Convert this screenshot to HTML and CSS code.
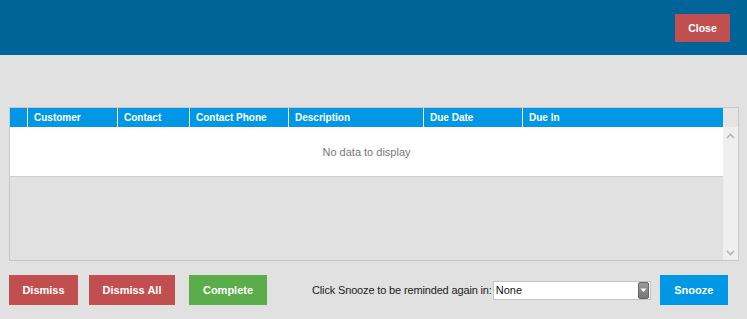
FILE: index.html
```html
<!DOCTYPE html>
<html lang="en">
<head>
    <meta charset="UTF-8">
    <title>Reminders</title>
    <link rel="stylesheet" href="styles.css">
</head>
<body>
    <div class="top-bar">
        <button class="btn btn-red btn-close">Close</button>
    </div>

    <div class="grid-wrap">
        <div class="grid-main">
            <div class="grid-head">
                <div class="col col-sel"></div>
                <div class="col col-customer">Customer</div>
                <div class="col col-contact">Contact</div>
                <div class="col col-phone">Contact Phone</div>
                <div class="col col-desc">Description</div>
                <div class="col col-date">Due Date</div>
                <div class="col col-in">Due In</div>
            </div>
            <div class="grid-empty">No data to display</div>
        </div>
        <div class="scrollbar">
            <div class="scroll-corner"></div>
            <div class="scroll-track">
                <svg width="9" height="6" viewBox="0 0 9 6"><path d="M1 5 L4.5 1.5 L8 5" fill="none" stroke="#b4b4b4" stroke-width="1.6"/></svg>
                <svg width="9" height="6" viewBox="0 0 9 6"><path d="M1 1 L4.5 4.5 L8 1" fill="none" stroke="#b4b4b4" stroke-width="1.6"/></svg>
            </div>
        </div>
    </div>

    <div class="actions">
        <button class="btn btn-red btn-dismiss">Dismiss</button>
        <button class="btn btn-red btn-dismiss-all">Dismiss All</button>
        <button class="btn btn-green btn-complete">Complete</button>
        <div class="snooze">
            <span class="snooze-label">Click Snooze to be reminded again in:</span>
            <div class="select">
                <span>None</span>
                <span class="select-arrow">
                    <svg width="7" height="5" viewBox="0 0 7 5"><path d="M0.5 0.5 L3.5 4 L6.5 0.5 Z" fill="#fff"/></svg>
                </span>
            </div>
        </div>
        <button class="btn btn-blue btn-snooze">Snooze</button>
    </div>
</body>
</html>
```

FILE: styles.css
```css
body {
    margin: 0;
    background: #e1e1e1;
    font-family: "Liberation Sans", Arial, sans-serif;
    font-size: 11px;
    width: 747px;
    height: 319px;
    overflow: hidden;
}
.top-bar {
    height: 55px;
    background: #006498;
    display: flex;
    justify-content: flex-end;
    align-items: flex-start;
    padding: 14px 17px 0 0;
    box-sizing: border-box;
}
.btn {
    border: none;
    color: #fff;
    font-family: "Liberation Sans", Arial, sans-serif;
    font-weight: bold;
    font-size: 11px;
    padding: 0;
    cursor: pointer;
}
.btn-red { background: #c24f50; }
.btn-green { background: #5bad4a; }
.btn-blue { background: #0098e4; }
.btn-close {
    width: 55px;
    height: 28px;
    font-size: 10.5px;
}

/* grid */
.grid-wrap {
    margin: 52px 8px 0 9px;
    height: 154px;
    border: 1px solid #c9c9c9;
    box-sizing: border-box;
    display: flex;
}
.grid-main {
    flex: 1;
}
.grid-head {
    display: flex;
    height: 19px;
    background: #0098e4;
    color: #fff;
    font-weight: bold;
    font-size: 10px;
}
.col {
    box-sizing: border-box;
    border-left: 1px solid #fff;
    padding-left: 6px;
    line-height: 19px;
    white-space: nowrap;
}
.col-sel { width: 17px; border-left: none; padding: 0; }
.col-customer { width: 90px; }
.col-contact { width: 72px; }
.col-phone { width: 99px; }
.col-desc { width: 135px; }
.col-date { width: 99px; }
.col-in { flex: 1; }
.grid-empty {
    height: 49px;
    background: #fff;
    border-bottom: 1px solid #cfcfcf;
    color: #777;
    text-align: center;
    line-height: 51px;
}
.scrollbar {
    width: 15px;
    display: flex;
    flex-direction: column;
}
.scroll-corner {
    height: 19px;
    background: #e4e4e4;
}
.scroll-track {
    flex: 1;
    background: #efefef;
    display: flex;
    flex-direction: column;
    justify-content: space-between;
    align-items: center;
    padding: 6px 0 4px;
}

/* bottom actions */
.actions {
    display: flex;
    align-items: center;
    margin: 14px 0 0 9px;
    height: 30px;
}
.btn-dismiss { width: 69px; height: 30px; }
.btn-dismiss-all { width: 86px; height: 30px; margin-left: 11px; }
.btn-complete { width: 78px; height: 30px; margin-left: 14px; }
.snooze {
    display: flex;
    align-items: center;
    margin-left: 45px;
}
.snooze-label {
    color: #222;
    font-size: 11px;
    letter-spacing: -0.15px;
}
.select {
    width: 158px;
    height: 19px;
    box-sizing: border-box;
    border: 1px solid #c4c4c4;
    background: #fff;
    display: flex;
    justify-content: space-between;
    align-items: center;
    padding-left: 2px;
    margin-left: 1px;
    color: #111;
}
.select-arrow {
    width: 11px;
    height: 17px;
    box-sizing: border-box;
    background: linear-gradient(#9a9a9a, #777);
    border: 1px solid #666;
    border-radius: 2px;
    display: flex;
    align-items: center;
    justify-content: center;
    margin-right: 1px;
}
.btn-snooze { width: 68px; height: 30px; margin-left: 9px; }
```
